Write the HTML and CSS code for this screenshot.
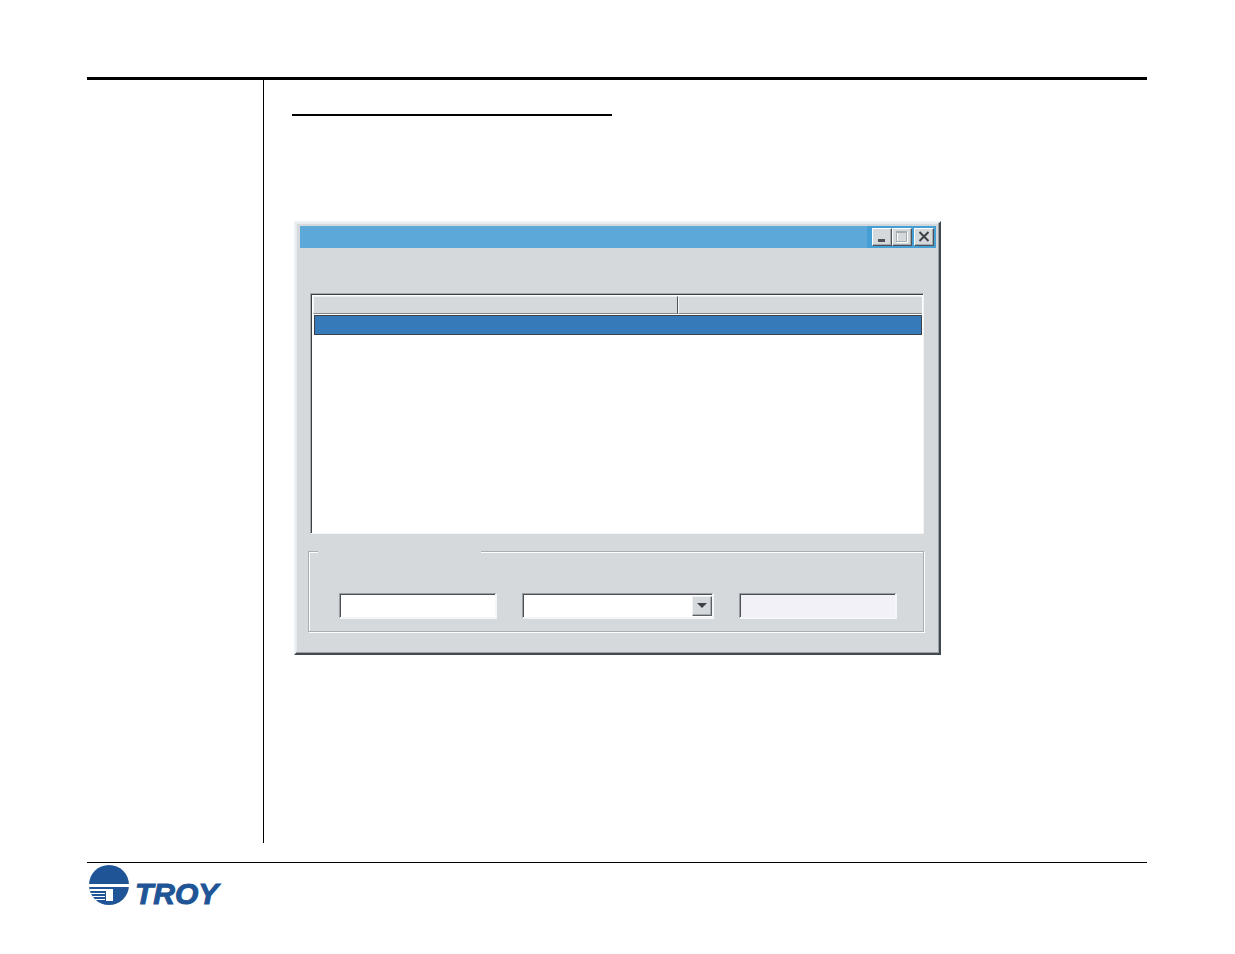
FILE: index.html
```html
<!DOCTYPE html>
<html lang="en">
<head>
<meta charset="utf-8">
<meta name="viewport" content="width=device-width, initial-scale=1">
<title>TROY</title>
<link rel="stylesheet" href="styles.css">
</head>
<body>
<div class="page">
  <div class="body">
    <aside class="margin-column"></aside>
    <main class="content">
      <div class="heading-rule"></div>
      <section class="window" aria-label="Window">
        <header class="titlebar">
          <div class="controls">
            <button class="control" type="button" aria-label="Minimize">
              <svg viewBox="0 0 18 16" width="18" height="16"><path d="M5 10h7v3H5z" fill="#4d5157"/></svg>
            </button>
            <button class="control" type="button" aria-label="Maximize">
              <svg viewBox="0 0 18 16" width="18" height="16"><path d="M4.500 3.500h10v10h-10z" fill="none" stroke="#fff"/><path d="M3.500 2.500h10v10h-10z" fill="none" stroke="#a5acaf"/><path d="M3 3.500h11" stroke="#a5acaf"/></svg>
            </button>
            <button class="control control-close" type="button" aria-label="Close">
              <svg viewBox="0 0 18 16" width="18" height="16"><path d="M4.500 3l9 9M13.500 3l-9 9" stroke="#3d4147" stroke-width="2"/></svg>
            </button>
          </div>
        </header>
        <div class="list">
          <table class="table" aria-label="List">
            <thead><tr><th class="col-main" scope="col"></th><th scope="col"></th></tr></thead>
            <tbody><tr><td colspan="2"><div class="selected"></div></td></tr></tbody>
          </table>
        </div>
        <fieldset class="group" aria-label="Settings">
          <legend class="legend"></legend>
          <div class="fields">
            <input class="field" type="text" aria-label="First value">
            <div class="combo">
              <select class="field" aria-label="Second value"><option></option></select>
              <span class="arrow"><svg viewBox="0 0 10 6" width="10" height="6"><path d="M0 0h10L5 5z" fill="#3d4147"/></svg></span>
            </div>
            <input class="field field-readonly" type="text" aria-label="Third value" readonly>
          </div>
        </fieldset>
      </section>
    </main>
  </div>
  <footer class="footer">
    <svg class="mark" viewBox="0 0 40 40" width="40" height="40" aria-hidden="true">
      <defs><clipPath id="disc"><circle cx="20" cy="20" r="20"/></clipPath></defs>
      <g clip-path="url(#disc)">
        <path d="M0 0h40v19H0zM0 22h40v18H0z" fill="#1f5596"/>
        <path d="M17 24h7v12h-7zM0 24h17v2H0zM0 28h16v1H0zM0 31h16v1H0zM0 34h16v1H0z" fill="#fff"/>
      </g>
    </svg>
    <span class="wordmark">TROY</span>
  </footer>
</div>
</body>
</html>
```
FILE: styles.css
```css
* { box-sizing: border-box; }

body {
  margin: 0;
  background: #fff;
  font-family: "Liberation Sans", Arial, sans-serif;
}

.page {
  display: flex;
  flex-direction: column;
  min-height: 100vh;
  padding: 77px 88px 45px 87px;
}

.body {
  display: flex;
  flex: 1;
  margin-bottom: 19px;
  border-top: 3px solid #000;
}

.margin-column { flex: 0 0 176px; }

.content {
  flex: 1;
  min-width: 0;
  padding: 34px 0 0 28px;
  border-left: 1px solid #000;
}

.heading-rule {
  max-width: 320px;
  height: 2px;
  background: #000;
}

.window {
  max-width: 647px;
  margin: 105px 0 0 2px;
  padding: 3px 3px 21px 4px;
  background: #d5d9dc;
  border: 2px solid;
  border-color: #eef1f3 #41484f #41484f #eef1f3;
  box-shadow: inset -1px -1px #9ba1a5, inset 1px 1px #e6eaec;
}

.titlebar {
  display: flex;
  justify-content: flex-end;
  height: 22px;
  background: #5ca8d8;
}

.controls {
  display: flex;
  padding: 2px 2px 2px 5px;
  background: #459ed4;
}

.control {
  display: flex;
  width: 20px;
  height: 18px;
  padding: 0;
  background: #d5d9dc;
  border: 1px solid;
  border-color: #fff #4c5258 #4c5258 #fff;
  box-shadow: inset -1px -1px #a5acaf;
}

.control-close { margin-left: 2px; }

.list {
  height: 241px;
  margin: 45px 12px 0 10px;
  padding: 2px 1px 0 2px;
  background: #fff;
  border: 1px solid;
  border-color: #a3a8ab #f1f3f4 #f1f3f4 #a3a8ab;
  box-shadow: inset 1px 1px #3d4147;
}

.table {
  width: 100%;
  border-collapse: separate;
  border-spacing: 0;
}

.table th {
  height: 18px;
  padding: 0;
  background: #d5d9dc;
  border-top: 1px solid #eceff1;
  border-left: 1px solid #f5f6f7;
  border-bottom: 1px solid #85898b;
}

.table .col-main {
  width: 60%;
  border-right: 1px solid #4c5258;
}

.table td { padding: 1px 0 0 1px; }

.selected {
  height: 20px;
  background: #367aba;
  border: 1px solid #3d4147;
}

.group {
  position: relative;
  min-width: 0;
  height: 81px;
  margin: 17px 12px 0 8px;
  padding: 0 26px 0 30px;
  border: 1px solid #a9aeb1;
  box-shadow: inset 1px 1px #fff, 1px 1px #fff;
}

.legend {
  position: absolute;
  top: -1px;
  left: 9px;
  width: 163px;
  height: 2px;
  padding: 0;
  background: #d5d9dc;
}

.fields {
  display: grid;
  grid-template-columns: 158fr 192fr 158fr;
  column-gap: 25px;
  padding-top: 41px;
}

.field {
  display: block;
  width: 100%;
  height: 26px;
  padding: 2px 4px;
  background: #fff;
  border: 1px solid;
  border-color: #9a9fa3 #f4f6f7 #f4f6f7 #9a9fa3;
  border-width: 1px 2px 2px 1px;
  border-radius: 0;
  box-shadow: inset 1px 1px #4c5054;
  outline: 0;
  appearance: none;
  font: 14px "Liberation Sans", Arial, sans-serif;
}

.field-readonly { background: #f2f1f7; }

.combo { position: relative; }

.arrow {
  position: absolute;
  top: 3px;
  right: 2px;
  display: grid;
  place-items: center;
  width: 20px;
  height: 20px;
  background: #d5d9dc;
  border: 1px solid;
  border-color: #eef1f3 #5a6066 #5a6066 #eef1f3;
  box-shadow: inset -1px -1px #a5acaf;
  pointer-events: none;
}

.footer {
  display: flex;
  gap: 6px;
  padding: 2px 0 0 2px;
  border-top: 1px solid #000;
}

.wordmark {
  padding-top: 14px;
  color: #1f5596;
  font-size: 30px;
  font-style: italic;
  font-weight: 700;
  line-height: 30px;
  -webkit-text-stroke: 1px #1f5596;
}
```
